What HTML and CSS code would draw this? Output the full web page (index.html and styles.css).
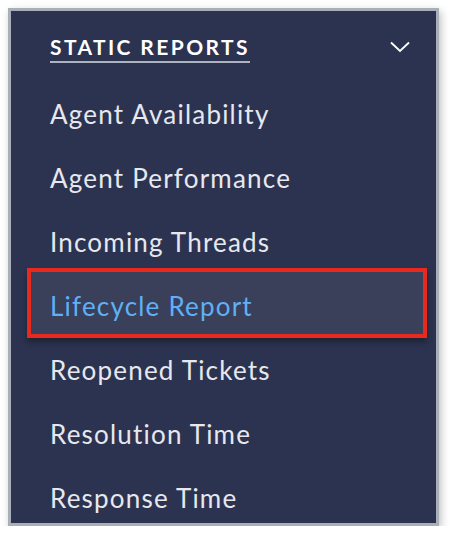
FILE: index.html
```html
<!DOCTYPE html>
<html lang="en">
<head>
    <meta charset="UTF-8">
    <title>Static Reports</title>
    <link rel="stylesheet" href="styles.css">
</head>
<body>
    <div class="panel">
        <div class="panel-header">
            <span class="panel-title">STATIC REPORTS</span>
            <svg class="chevron" width="20" height="12" viewBox="0 0 20 12">
                <path d="M1 1.5 L10 10 L19 1.5" fill="none" stroke="#ffffff" stroke-width="1.8"/>
            </svg>
        </div>
        <ul class="report-list">
            <li class="report-item">Agent Availability</li>
            <li class="report-item">Agent Performance</li>
            <li class="report-item">Incoming Threads</li>
            <li class="report-item active"><span>Lifecycle Report</span></li>
            <li class="report-item">Reopened Tickets</li>
            <li class="report-item">Resolution Time</li>
            <li class="report-item">Response Time</li>
        </ul>
    </div>
</body>
</html>
```

FILE: styles.css
```css
body {
    margin: 0;
    background-color: #ffffff;
    font-family: Lato, "Noto Sans", sans-serif;
}

.panel {
    margin: 8px 0 0 8px;
    width: 425px;
    height: 512px;
    background-color: #2c3350;
    border: 3px solid #a9afb8;
    box-shadow: 2px 3px 8px rgba(0, 0, 0, 0.25);
    overflow: hidden;
}

.panel-header {
    display: flex;
    justify-content: space-between;
    align-items: center;
    height: 71px;
    padding: 0 26px 0 39px;
    box-sizing: border-box;
}

.panel-title {
    color: #ffffff;
    font-size: 21px;
    font-weight: 700;
    letter-spacing: 2.4px;
    line-height: 24px;
    padding-bottom: 2px;
    border-bottom: 2px solid #aeb3c0;
    margin-top: 4px;
}

.chevron {
    display: block;
    margin-top: 1px;
}

.report-list {
    list-style: none;
    margin: 0;
    padding: 0;
}

.report-item {
    display: flex;
    align-items: center;
    height: 64px;
    padding-left: 39px;
    color: #e6e8ee;
    font-size: 26px;
    letter-spacing: 1.2px;
}

.report-item.active {
    position: relative;
    color: #5fb0f5;
}

.report-item.active::before {
    content: "";
    position: absolute;
    top: -6px;
    bottom: 0;
    left: 16px;
    right: 9px;
    background-color: #3a3f5a;
    border: 4px solid #e8291e;
    box-shadow: 0 4px 6px rgba(0, 0, 0, 0.35);
}

.report-item.active span {
    position: relative;
}
```
